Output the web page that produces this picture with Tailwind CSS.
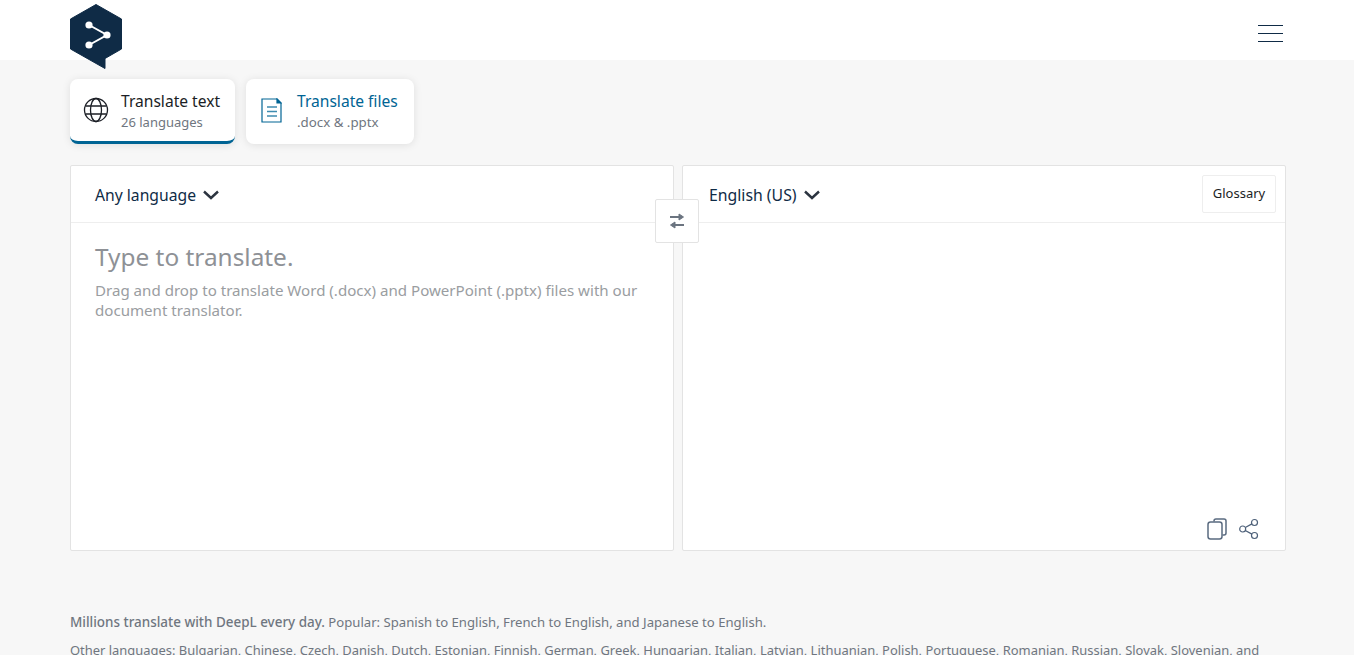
<!DOCTYPE html>
<html lang="en">
<head>
<meta charset="utf-8">
<title>DeepL Translate</title>
<script src="https://cdn.jsdelivr.net/npm/@tailwindcss/browser@4"></script>
</head>
<body class="h-[655px] overflow-hidden bg-[#f7f7f7] font-['Noto_Sans',sans-serif] text-[#0f2b46]">
    <!-- Header -->
    <header class="h-[60px] bg-white pl-[70px] pr-[71px] flex justify-between items-start">
        <svg class="w-[52px] h-[66px] mt-[4px] relative z-10" viewBox="0 0 52 66">
            <path d="M26 0.5L51.5 15V45L35 54.5V64.5L0.5 45V15Z" fill="#0f2b46" stroke="#0f2b46" stroke-width="1" stroke-linejoin="round"/>
            <path d="M19 21L37 31L19 41" fill="none" stroke="#fff" stroke-width="2"/>
            <circle cx="19" cy="21" r="3.6" fill="#fff"/>
            <circle cx="37" cy="31" r="3.6" fill="#fff"/>
            <circle cx="19" cy="41" r="3.6" fill="#fff"/>
        </svg>
        <button class="mt-[25px] w-[25px] flex flex-col gap-[7px]">
            <span class="block h-[1px] bg-[#0f2b46]"></span>
            <span class="block h-[1px] bg-[#0f2b46]"></span>
            <span class="block h-[1px] bg-[#0f2b46]"></span>
        </button>
    </header>

    <main class="pl-[70px] pr-[68px]">
        <!-- Tabs -->
        <div class="flex gap-[11px] pt-[19px]">
            <div class="w-[165px] h-[65px] bg-white rounded-lg shadow-[0_1px_8px_rgba(0,0,0,0.1)] border-b-[3px] border-[#006494] flex items-center pl-[13px] gap-[12px]">
                <svg class="w-[26px] h-[26px] shrink-0" viewBox="0 0 26 26" fill="none" stroke="#1b1e25" stroke-width="1.3">
                    <circle cx="13" cy="13" r="11.5"/>
                    <ellipse cx="13" cy="13" rx="5.5" ry="11.5"/>
                    <path d="M2.5 9H23.5M2.5 17H23.5"/>
                </svg>
                <div class="mt-[2px]">
                    <div class="text-[15.6px] leading-[20px] text-[#1b1e25]">Translate text</div>
                    <div class="text-[13px] leading-[18px] mt-[2px] text-[#6f7680]">26 languages</div>
                </div>
            </div>
            <div class="w-[168px] h-[65px] bg-white rounded-lg shadow-[0_1px_8px_rgba(0,0,0,0.1)] flex items-center pl-[15px] gap-[15px]">
                <svg class="w-[21px] h-[25px] shrink-0 -mt-[2px]" viewBox="0 0 21 25" fill="none" stroke="#006494" stroke-width="1.2">
                    <path d="M1 1H16L20 5V24H1Z"/>
                    <path d="M16 1L20 5H16Z" fill="#006494"/>
                    <path d="M6 9H16M6 13.5H16M6 18H16" stroke="#3f8cb0" stroke-width="1.4"/>
                </svg>
                <div class="-mt-[1px]">
                    <div class="text-[15.6px] leading-[20px] text-[#006494]">Translate files</div>
                    <div class="text-[13.3px] leading-[18px] mt-[2px] text-[#6f7680]">.docx &amp; .pptx</div>
                </div>
            </div>
        </div>

        <!-- Translator panels -->
        <div class="relative flex gap-[8px] mt-[21px] h-[386px]">
            <section class="w-[604px] bg-white border border-[#e3e3e3] rounded-[2px] flex flex-col">
                <div class="h-[57px] shrink-0 border-b border-[#eeeeee] flex items-center pl-[24px] gap-[7px]">
                    <span class="text-[15.7px] mt-[4px]">Any language</span>
                    <svg class="w-[16px] h-[10px] mt-[1px]" viewBox="0 0 16 10" fill="none" stroke="#2c3440" stroke-width="2.4"><path d="M1 1.5L8 8L15 1.5"/></svg>
                </div>
                <div class="pl-[24px] pr-[24px] pt-[17px]">
                    <div class="text-[24.4px] leading-[34px] text-[#8e9196]">Type to translate.</div>
                    <p class="text-[15.1px] leading-[20px] text-[#9a9da1] mt-[6px]">Drag and drop to translate Word (.docx) and PowerPoint (.pptx) files with our document translator.</p>
                </div>
            </section>

            <section class="w-[604px] bg-white border border-[#e3e3e3] rounded-[2px] flex flex-col">
                <div class="h-[57px] shrink-0 border-b border-[#eeeeee] flex items-center pl-[26px] pr-[9px] gap-[7px]">
                    <span class="text-[15.8px] mt-[4px]">English (US)</span>
                    <svg class="w-[16px] h-[10px] mt-[1px]" viewBox="0 0 16 10" fill="none" stroke="#2c3440" stroke-width="2.4"><path d="M1 1.5L8 8L15 1.5"/></svg>
                    <button class="ml-auto h-[38px] w-[74px] border border-[#eeeeee] rounded-[2px] text-[13px] text-[#1b1e25]">Glossary</button>
                </div>
                <div class="mt-auto flex justify-end items-center gap-[12px] pr-[26px] pb-[10px]">
                    <svg class="w-[20px] h-[22px]" viewBox="0 0 20 22" fill="none" stroke="#5a6b80" stroke-width="1.5">
                        <path d="M7 3.5V3A2 2 0 0 1 9 1H17A2 2 0 0 1 19 3V15A2 2 0 0 1 17 17H15.5"/>
                        <rect x="1" y="4" width="14" height="17" rx="2.5"/>
                    </svg>
                    <svg class="w-[20px] h-[22px]" viewBox="0 0 20 22" fill="none" stroke="#4d6079" stroke-width="1.2">
                        <circle cx="3.7" cy="11" r="3"/>
                        <circle cx="15.5" cy="4.5" r="3"/>
                        <circle cx="15.5" cy="17.5" r="3"/>
                        <path d="M6.3 9.5L12.9 5.9M6.3 12.5L12.9 16.1"/>
                    </svg>
                </div>
            </section>

            <!-- Swap button sits over both panels -->
            <button class="absolute left-[585px] top-[34px] w-[44px] h-[44px] bg-white border border-[#e3e3e3] rounded-[2px] flex items-center justify-center">
                <svg class="w-[16px] h-[18px]" viewBox="0 0 16 18" fill="#6b7480" stroke="#6b7480" stroke-width="2">
                    <path d="M1 5H10" fill="none"/>
                    <path d="M10 2L14.5 5L10 8Z" stroke-width="1" stroke-linejoin="round"/>
                    <path d="M15 13H6" fill="none"/>
                    <path d="M6 10L1.5 13L6 16Z" stroke-width="1" stroke-linejoin="round"/>
                </svg>
            </button>
        </div>

        <!-- Footer text -->
        <div class="mt-[61px] text-[13.13px] leading-[20px] text-[#6f7680]">
            <p><span class="font-medium text-[13.45px]">Millions translate with DeepL every day.</span> Popular: Spanish to English, French to English, and Japanese to English.</p>
            <p class="mt-[8px] text-[12.95px]">Other languages: Bulgarian, Chinese, Czech, Danish, Dutch, Estonian, Finnish, German, Greek, Hungarian, Italian, Latvian, Lithuanian, Polish, Portuguese, Romanian, Russian, Slovak, Slovenian, and Swedish.</p>
        </div>
    </main>
</body>
</html>
